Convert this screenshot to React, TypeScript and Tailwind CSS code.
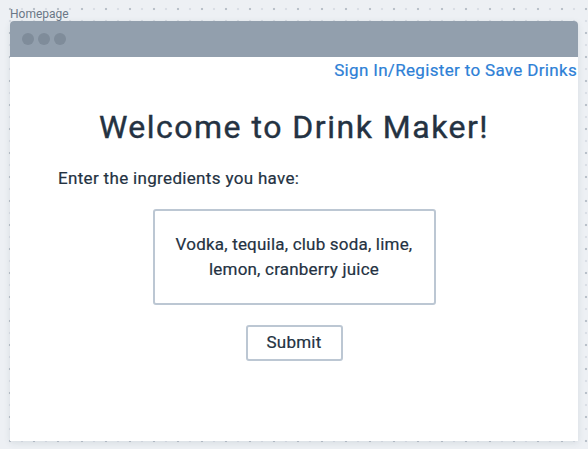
export default function App() {
  return (
    <div className="h-[449px] w-[588px] overflow-hidden bg-[#edf0f4] bg-[radial-gradient(circle,#b9c1ca_1px,transparent_1.6px),radial-gradient(circle,#d9dee5_1px,transparent_1.6px)] bg-[size:24px_24px,12px_12px] bg-[position:22px_21px,4px_3px] font-['Roboto',sans-serif]">
      <div className="flex h-[21px] items-end pl-[10px] text-[12px] leading-[14px] text-[#6b7786]">
        Homepage
      </div>
      <div className="ml-[10px] flex h-[420px] w-[568px] flex-col overflow-hidden rounded-t-[4px] bg-white shadow-[0_2px_6px_rgba(60,80,100,0.12)]">
        <div className="flex h-[36px] shrink-0 items-center gap-[4px] bg-[#929fad] pl-[12px]">
          <span className="h-[12px] w-[12px] rounded-full bg-[#7f8c9a]" />
          <span className="h-[12px] w-[12px] rounded-full bg-[#7f8c9a]" />
          <span className="h-[12px] w-[12px] rounded-full bg-[#7f8c9a]" />
        </div>
        <div className="flex justify-end pr-[1px] pt-[2px]">
          <a className="text-[17px] leading-[22px] tracking-[0.33px] text-[#2d80d6] [-webkit-text-stroke:0.2px_#2d80d6]">
            Sign In/Register to Save Drinks
          </a>
        </div>
        <h1 className="mt-[26px] text-center text-[32px] leading-[40px] tracking-[1.5px] text-[#243242] [-webkit-text-stroke:0.4px_#243242]">
          Welcome to Drink Maker!
        </h1>
        <p className="mt-[20px] pl-[48px] text-[17px] leading-[22px] tracking-[0.33px] text-[#243242] [-webkit-text-stroke:0.2px_#243242]">
          Enter the ingredients you have:
        </p>
        <div className="mt-[20px] flex justify-center">
          <div className="flex h-[96px] w-[283px] items-center justify-center rounded-[3px] border-2 border-[#bcc7d3] px-[12px] text-center text-[17px] leading-[25px] tracking-[0.2px] text-[#243242] [-webkit-text-stroke:0.2px_#243242]">
            Vodka, tequila, club soda, lime, lemon, cranberry juice
          </div>
        </div>
        <div className="mt-[20px] flex justify-center">
          <button className="h-[36px] w-[97px] rounded-[3px] border-2 border-[#bcc7d3] text-[17px] tracking-[0.2px] text-[#243242] [-webkit-text-stroke:0.2px_#243242]">
            Submit
          </button>
        </div>
      </div>
    </div>
  );
}
